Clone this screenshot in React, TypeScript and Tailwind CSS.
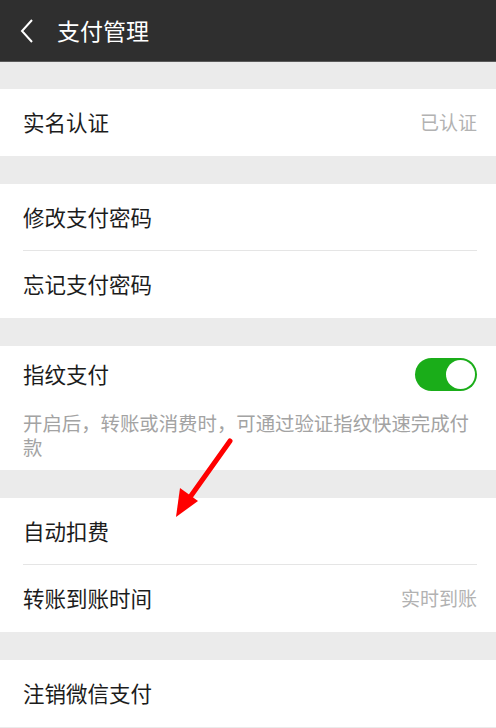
import React from "react";

const font = { fontFamily: '"Noto Sans CJK SC", "Noto Sans", sans-serif' };

function Row({ label, value, border }: { label: string; value?: string; border?: boolean }) {
  return (
    <div className="pl-[23px] pr-[19px]">
      <div className={`h-[67px] flex items-center justify-between ${border ? "border-b border-[#e5e5e5]" : ""}`}>
        <span className="text-[21.5px] text-[#1c1c1c]">{label}</span>
        {value && <span className="text-[19px] text-[#b2b2b2]">{value}</span>}
      </div>
    </div>
  );
}

export default function App() {
  return (
    <div className="relative w-[496px] h-[728px] overflow-hidden bg-[#ebebeb]" style={font}>
      {/* header */}
      <div className="h-[62px] bg-[#2f2f2f] border-b border-[#5a5a5a] flex items-center">
        <svg width="18" height="26" viewBox="0 0 18 26" className="ml-[18px]">
          <path d="M14 2 L4 13 L14 24" fill="none" stroke="#fff" strokeWidth="2" />
        </svg>
        <span className="ml-[21px] text-[23px] text-white">支付管理</span>
      </div>

      <div className="h-[27px]" />
      <div className="bg-white">
        <Row label="实名认证" value="已认证" />
      </div>

      <div className="h-[28px]" />
      <div className="bg-white">
        <Row label="修改支付密码" border />
        <Row label="忘记支付密码" />
      </div>

      <div className="h-[28px]" />
      <div className="bg-white pl-[23px] pr-[19px] pb-[11px]">
        <div className="h-[56px] flex items-center justify-between">
          <span className="text-[21.5px] text-[#1c1c1c]">指纹支付</span>
          <div className="w-[62px] h-[33px] rounded-full bg-[#1aad19] flex items-center justify-end pr-[2px]">
            <div className="w-[29px] h-[29px] rounded-full bg-white" />
          </div>
        </div>
        <p className="mt-[9px] text-[19.4px] leading-[24px] text-[#a3a3a3]">
          开启后，转账或消费时，可通过验证指纹快速完成付款
        </p>
      </div>

      <div className="h-[28px]" />
      <div className="bg-white">
        <Row label="自动扣费" border />
        <Row label="转账到账时间" value="实时到账" />
      </div>

      <div className="h-[28px]" />
      <div className="bg-white">
        <Row label="注销微信支付" />
      </div>

      {/* red arrow annotation */}
      <svg className="absolute left-0 top-0 pointer-events-none" width="496" height="728">
        <line x1="230" y1="441" x2="188" y2="500" stroke="#ff0000" strokeWidth="5" strokeLinecap="round" />
        <polygon points="176,517 180,488 198,501" fill="#ff0000" />
      </svg>
    </div>
  );
}
